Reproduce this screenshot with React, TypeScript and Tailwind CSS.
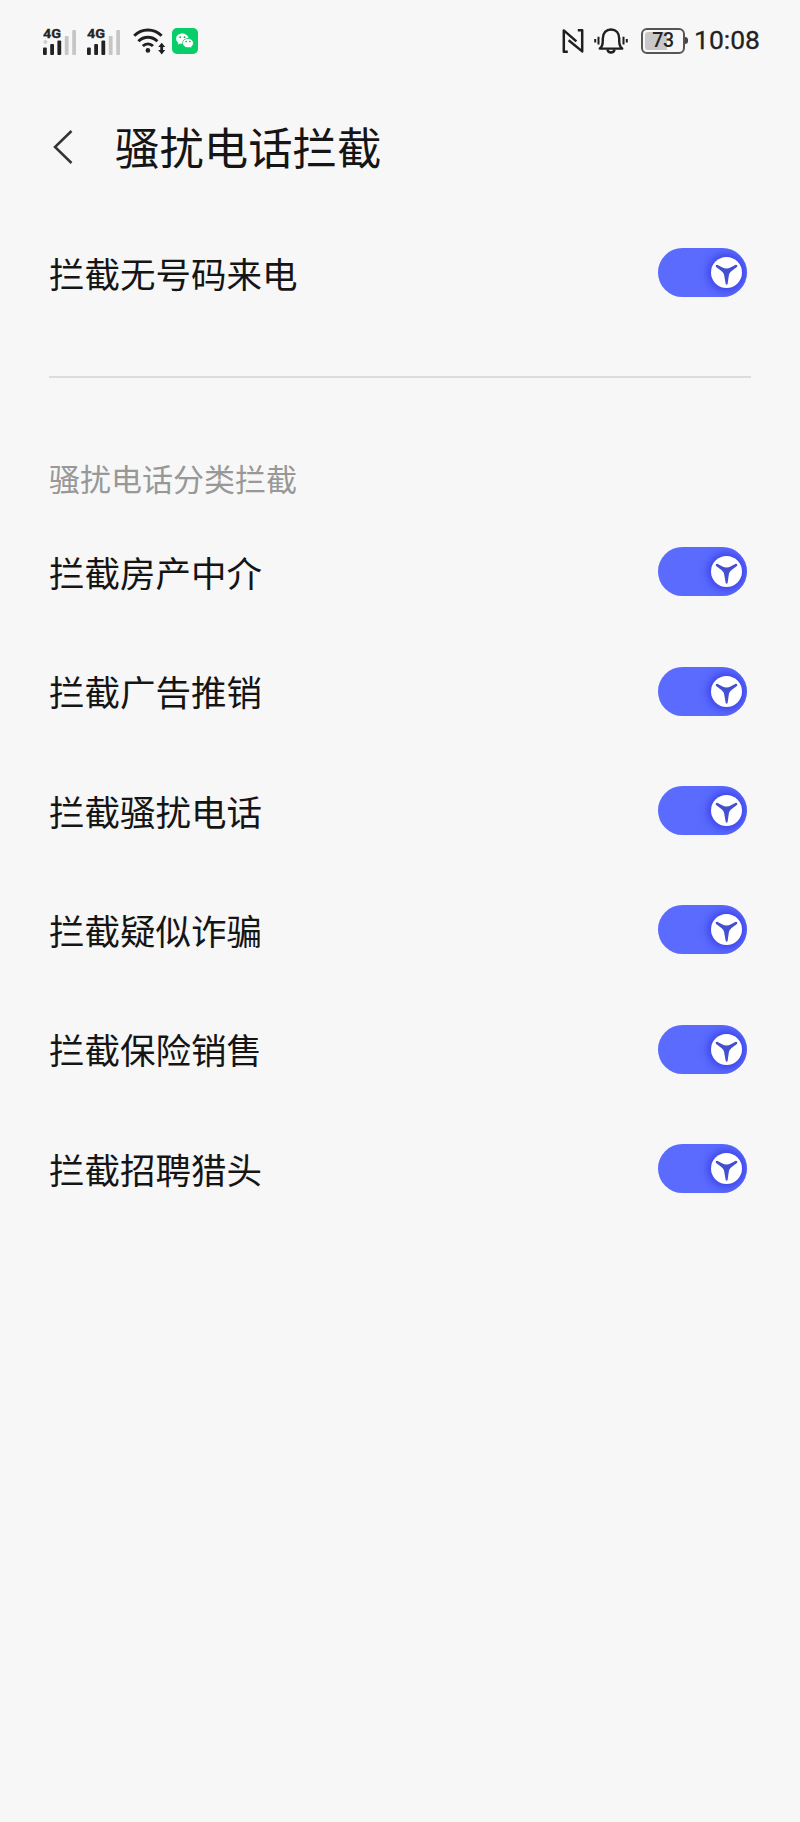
import { useState } from 'react';

const categories = [
  '拦截房产中介',
  '拦截广告推销',
  '拦截骚扰电话',
  '拦截疑似诈骗',
  '拦截保险销售',
  '拦截招聘猎头',
];

const SignalIcon = ({ roaming = false }: { roaming?: boolean }) => (
  <svg width="34" height="30" viewBox="0 0 34 30">
    <text x="0" y="11.6" fontSize="13" fontWeight="700" fill="#252525" stroke="#252525" strokeWidth="0.3" fontFamily="Roboto, sans-serif" textLength="18" lengthAdjust="spacingAndGlyphs">4G</text>
    {roaming && <circle cx="2.4" cy="16" r="2" fill="#d0d0d0" />}
    <g fill="#222">
      <rect x="0" y="21.5" width="3.8" height="7.5" rx="1" />
      <rect x="7.2" y="18" width="3.8" height="11" rx="1" />
      <rect x="14.4" y="14.5" width="3.8" height="14.5" rx="1" />
    </g>
    <g fill="#c6c6c6">
      <rect x="21.8" y="10" width="3.8" height="19" rx="1" />
      <rect x="29.2" y="4" width="3.8" height="25" rx="1" />
    </g>
  </svg>
);

const WifiIcon = () => (
  <svg width="33" height="28" viewBox="0 0 33 28" fill="none" stroke="#1f1f1f" strokeWidth="3">
    <path d="M1.2 8.8C9 1.100 20.800 1.100 28.600 8.800" />
    <path d="M5.400 14.200c5.500-5.400 13.500-5.400 19 0" />
    <path d="M9.800 19c3-2.800 7.200-2.800 10.200 0" />
    <circle cx="14.9" cy="23.400" r="2.300" fill="#1f1f1f" stroke="none" />
    <path d="M28.700 15.800l3.500 4.300h-2.100v3h2.100l-3.500 4.300-3.500-4.300h2.100v-3h-2.100z" fill="#1f1f1f" stroke="none" />
  </svg>
);

const WeChatIcon = () => (
  <svg width="26" height="26" viewBox="0 0 26 26">
    <rect width="26" height="26" rx="5" fill="#08cd68" />
    <path d="M10.300 5.600c-3.500 0-6.200 2.200-6.200 5.100 0 1.700.9 3.100 2.300 4l-.6 2 2.300-1.200c.7.2 1.400.3 2.200.3 3.400 0 6.200-2.300 6.200-5.100s-2.800-5.100-6.200-5.100z" fill="#fff" />
    <path d="M16 10.400c-3.100 0-5.500 2.100-5.500 4.700s2.400 4.700 5.500 4.700c.7 0 1.300-.1 1.900-.3l2 1.100-.5-1.800c1.300-.9 2.100-2.200 2.100-3.700 0-2.600-2.400-4.700-5.500-4.700z" fill="#fff" stroke="#08cd68" strokeWidth="0.8" />
    <g fill="#08a957">
      <circle cx="8.200" cy="9.200" r="0.9" />
      <circle cx="12.500" cy="9.200" r="0.9" />
      <circle cx="14.200" cy="13.600" r="0.8" />
      <circle cx="17.900" cy="13.600" r="0.8" />
    </g>
  </svg>
);

const NfcIcon = () => (
  <svg width="22" height="26" viewBox="0 0 22 26" fill="none" stroke="#1f1f1f" strokeWidth="2.5" strokeLinejoin="round">
    <path d="M5.800 23.800H1.800V2.400L14.400 13.400" />
    <path d="M15.800 2.200h4.400v21.200L6.600 12.200" />
  </svg>
);

const BellIcon = () => (
  <svg width="34" height="28" viewBox="0 0 34 28" fill="none" stroke="#1f1f1f" strokeWidth="2.400">
    <path d="M5.800 21.600c2.800-2 3-4.600 3-8.100v-2C8.800 5.900 12.200 2.500 17 2.500s8.200 3.400 8.200 9v2c0 3.500.2 6.100 3 8.100z" strokeLinejoin="round" />
    <path d="M13.400 22.500c.4 2 1.800 3 3.600 3s3.200-1 3.600-3" />
    <path d="M4.500 9.800v7.800M29.500 9.800v7.800" strokeWidth="2" />
    <path d="M1.200 12v3.500M32.800 12v3.500" strokeWidth="2" />
  </svg>
);

const Battery = () => (
  <div className="flex items-center">
    <div className="flex h-[26px] w-[44px] rounded-[6px] border-2 border-[#555] p-[2px]">
      <div className="flex h-full w-full items-center justify-center rounded-[3px] bg-gradient-to-r from-[#c8c8c8] from-[62%] to-[#f7f7f7] to-[62%]">
        <span className="font-['Roboto'] text-[19.5px] leading-none font-medium tracking-[-0.3px] text-[#252525]">73</span>
      </div>
    </div>
    <div className="h-[7px] w-[3px] rounded-r-[3px] bg-[#444]" />
  </div>
);

const Toggle = () => {
  const [on, setOn] = useState(true);

  return (
    <button
      role="switch"
      aria-checked={on}
      onClick={() => setOn(!on)}
      className={`flex h-[49px] w-[89px] shrink-0 items-center overflow-hidden rounded-full px-[5px] ${on ? 'justify-end bg-[#5a6bfe]' : 'justify-start bg-[#cfcfcf]'}`}
    >
      <span className="flex size-[31px] items-center justify-center rounded-full bg-white shadow-[0_0_8px_3px_#3c40e6]">
        <svg width="31" height="31" viewBox="0 0 31 31" fill="#444fcf">
          <path d="M6.200 7.800C9.500 9.500 12.600 11.600 15.500 11.600S21.500 9.500 24.800 7.800Q27.200 8.200 25.900 10L20.300 14.200Q18.300 15.800 17.900 18L16.600 27Q15.500 28.600 14.700 27L13.100 18Q12.700 15.800 10.700 14.200L5.100 10Q3.900 8.200 6.200 7.800Z" />
        </svg>
      </span>
    </button>
  );
};

const SettingRow = ({ label }: { label: string }) => (
  <div className="flex h-[119.3px] items-center justify-between pr-[4px]">
    <span className="text-[35.5px] leading-none text-[#151515]">{label}</span>
    <Toggle />
  </div>
);

const App = () => {
  return (
    <div className="flex min-h-[1822px] w-full flex-col bg-[#f7f7f7] font-['Noto_Sans_CJK_SC',sans-serif]">
      {/* Status bar */}
      <div className="flex h-[81px] items-center justify-between pr-[40px] pl-[43px]">
        <div className="flex items-center">
          <SignalIcon roaming />
          <div className="ml-[10px]"><SignalIcon /></div>
          <div className="ml-[12px]"><WifiIcon /></div>
          <div className="ml-[6px]"><WeChatIcon /></div>
        </div>
        <div className="flex items-center">
          <NfcIcon />
          <div className="ml-[10px]"><BellIcon /></div>
          <div className="ml-[13px]"><Battery /></div>
          <span className="ml-[6px] font-['Roboto'] text-[26.5px] leading-none text-[#222] [-webkit-text-stroke:0.3px_#222]">10:08</span>
        </div>
      </div>

      {/* Title */}
      <header className="flex h-[132px] items-center pl-[53px]">
        <svg width="20" height="34" viewBox="0 0 20 34" fill="none" stroke="#333" strokeWidth="2.5">
          <path d="M18.500 1L2 17l16.500 16" />
        </svg>
        <h1 className="mb-[2px] ml-[42px] text-[44.4px] leading-none text-[#151515]">骚扰电话拦截</h1>
      </header>

      <main className="px-[49px]">
        <SettingRow label="拦截无号码来电" />
        <div className="mt-[43.7px] h-[2px] bg-[#dcdcdc]" />
        <h2 className="mt-[84px] text-[31px] leading-[31px] text-[#989898]">骚扰电话分类拦截</h2>
        <div className="mt-[19.300px]">
          {categories.map((label) => (
            <SettingRow key={label} label={label} />
          ))}
        </div>
      </main>
    </div>
  );
};

export default App;
